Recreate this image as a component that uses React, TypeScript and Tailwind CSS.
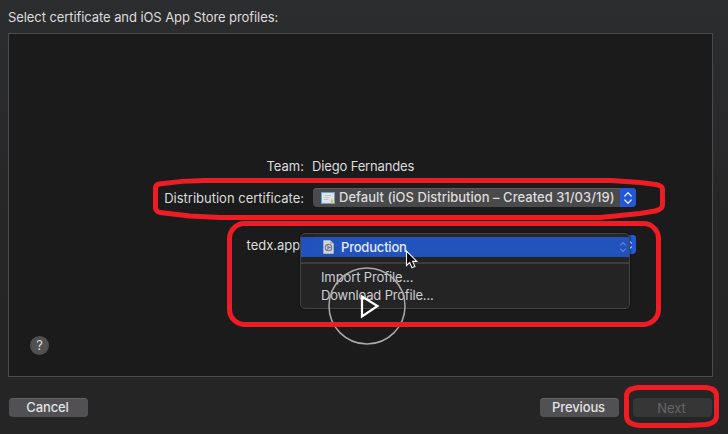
import type { ReactNode } from 'react';

function Chevrons() {
  return (
    <span className="flex h-full w-4 items-center justify-center rounded-r-[3px] bg-[#2257dc]">
      <svg width="10" height="14" viewBox="0 0 10 14" fill="none" stroke="#e4e9f5" strokeWidth="1.3" strokeLinecap="round" strokeLinejoin="round">
        <path d="M1.8 5 5 1.8 8.2 5M1.8 9 5 12.2 8.2 9" />
      </svg>
    </span>
  );
}

function Select({ children }: { children: ReactNode }) {
  return (
    <div className="flex h-[19px] w-[323px] items-center justify-between overflow-hidden rounded-[4px] bg-[#4a4a4c] shadow-[inset_0_1px_0_#5d5d5f]">
      <div className="flex items-center pl-2">{children}</div>
      <Chevrons />
    </div>
  );
}

function CertificateIcon() {
  return (
    <svg width="14" height="12" viewBox="0 0 14 12">
      <rect x="0.5" y="0.5" width="13" height="11" fill="#dfe3e7" stroke="#6f9fc4" />
      <path d="M4 3.5h6M3 5.5h5M3 7.5h4" stroke="#a9b6c6" strokeWidth="0.7" />
      <circle cx="11" cy="8.8" r="1.5" fill="#d8c850" />
      <path d="m10 10 .2 1.8.8-.6.8.6V10" fill="#d8c850" />
    </svg>
  );
}

function ProfileIcon() {
  return (
    <svg width="11" height="14" viewBox="0 0 11 14">
      <path d="M.3.3h7l3.4 3.4v10H.3z" fill="#d3d6dc" />
      <path d="M7.3.3v3.4h3.4" fill="#a4adc0" />
      <circle cx="5.5" cy="7.5" r="3.3" fill="#bfc3cc" stroke="#737a8c" strokeWidth="1.1" />
      <path d="M5.500 7.500h3M5.500 7.500 4 5M5.500 7.500 4 10" stroke="#737a8c" strokeWidth=".8" />
      <circle cx="5.500" cy="7.500" r="1" fill="#737a8c" />
    </svg>
  );
}

function ProfileMenu() {
  return (
    <div className="absolute top-[-2px] left-[-13px] h-[76px] w-[330px] overflow-hidden rounded-[5px] border border-[#444446] bg-[#252526]/95 pt-[3px] shadow-[0_0_2px_#000]">
      <div className="flex h-5 items-center bg-[#2254c4]/95 pl-[22px]">
        <ProfileIcon />
        <span className="mt-px ml-[7px] text-[13px] leading-[19px] font-medium tracking-[-0.2px] text-[#e6eaf4]">Production</span>
        <svg className="ml-auto mr-px opacity-35" width="10" height="12" viewBox="0 0 10 14" fill="none" stroke="#dce5f8" strokeWidth="1.3">
          <path d="M1.8 5 5 1.8 8.2 5M1.8 9 5 12.2 8.2 9" />
        </svg>
      </div>
      <div className="mt-[5px] h-[2px] bg-[#3d3d3f]" />
      <div className="pt-1 pl-5 text-[13px] leading-[18px] text-[#cfcfcf]">
        <div className="tracking-[-0.12px]">Import Profile...</div>
        <div className="tracking-[-0.18px]">Download Profile...</div>
      </div>
    </div>
  );
}

function Button({ children, disabled = false }: { children: ReactNode; disabled?: boolean }) {
  return (
    <button
      disabled={disabled}
      className={
        disabled
          ? 'h-[19px] w-[79px] rounded-[4px] bg-[#363637] pr-[2px] text-[13px] leading-[18px] text-[#656567]'
          : 'h-[19px] w-[79px] rounded-[4px] border-t border-[#656567] bg-[#515153] pr-[2px] pb-px text-[13px] leading-[17px] font-medium tracking-[-0.12px] text-[#e2e2e2]'
      }
    >
      {children}
    </button>
  );
}

function Markings() {
  return (
    <svg className="pointer-events-none absolute inset-0" width="728" height="434" viewBox="0 0 728 434" fill="none">
      <circle cx="367" cy="306" r="38" stroke="#a9a9a9" strokeWidth="1.5" />
      <path d="M362 296.500v20l15.500-10.500z" stroke="#fff" strokeWidth="2.200" />
      <g stroke="#ee1c24" strokeWidth="5" strokeLinejoin="round">
        <path d="M159 184 Q182 180.500 205 180.500H611L640 182.500 656 184.500Q662.500 186 662.500 189V205Q662.500 209 655 211L640 213.500 600 217.500H220L190 216 160 212.500Q155.500 211 155.500 208V188Q155.500 185 159 184Z" />
        <rect x="229.500" y="223.500" width="429" height="101" rx="15" />
        <path d="M638 387.500H706Q716.500 388.500 716.500 396V416Q716.500 423 706 424.500L688 425.500H640Q626.500 424.500 626.500 416V396Q626.500 388.500 638 387.500Z" />
      </g>
      <path d="M406.500 251v14.500l3.200-3 2.300 5.200 2.900-1.300-2.300-5h4.200z" fill="#080808" stroke="#f5f5f5" strokeWidth="1.100" />
    </svg>
  );
}

export default function App() {
  return (
    <main className="relative flex h-[434px] w-[728px] flex-col overflow-hidden bg-linear-to-b from-[#2c2d2f] via-[#262627] to-[#252525] px-2 font-['Inter','Liberation_Sans',sans-serif] text-[13px] text-[#dddddd]">
      <h1 className="h-[33px] pt-2 leading-[19px] font-normal tracking-[-0.08px] whitespace-nowrap">Select certificate and iOS App Store profiles:</h1>
      <section className="flex h-[344px] w-[705px] flex-col border border-[#4b4b4c] bg-[#1b1b1b]">
        <div className="grid grid-cols-[295px_323px] items-center gap-x-[9px] pt-[122px] whitespace-nowrap">
          <div className="h-[22px] text-right leading-[21px]">Team:</div>
          <div className="h-[22px] leading-[21px] tracking-[-0.15px]"><span className="-ml-px">Diego Fernandes</span></div>
          <div className="mt-[10px] h-[19px] text-right leading-[20px]">Distribution certificate:</div>
          <div className="mt-[10px]">
            <Select>
              <CertificateIcon />
              <span className="mt-px ml-1 font-medium tracking-[0.025px]">Default (iOS Distribution – Created 31/03/19)</span>
            </Select>
          </div>
          <div className="mt-7 h-[19px] text-right leading-[20px]">tedx.app:</div>
          <div className="relative mt-7">
            <Select><span className="text-[#919191]">Select Profile...</span></Select>
            <ProfileMenu />
          </div>
        </div>
        <button aria-label="Help" className="mt-[82px] ml-[21px] flex h-[19px] w-[19px] items-center justify-center rounded-full bg-[#505051] text-[13px]">?</button>
      </section>
      <footer className="flex w-[704px] items-center pt-[21px] pl-px">
        <Button>Cancel</Button>
        <div className="ml-auto flex gap-[14px]">
          <Button>Previous</Button>
          <Button disabled>Next</Button>
        </div>
      </footer>
      <Markings />
    </main>
  );
}
